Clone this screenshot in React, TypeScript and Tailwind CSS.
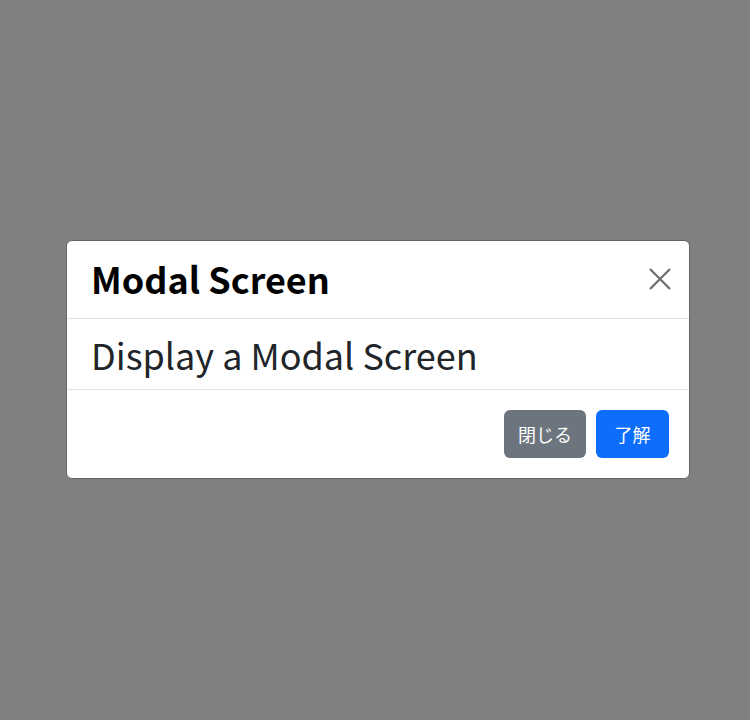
import React from "react";

const font = { fontFamily: '"Noto Sans CJK JP", "Noto Sans", sans-serif' };

function CloseIcon() {
  return (
    <svg width="22" height="22" viewBox="0 0 22 22" aria-hidden="true">
      <path d="M1 1 L21 21 M21 1 L1 21" stroke="#6c6c6c" strokeWidth="2.2" fill="none" />
    </svg>
  );
}

export default function App() {
  return (
    <div
      className="h-[720px] w-[750px] bg-[#808080] pl-[66px] pr-[60px] pt-[240px]"
      style={font}
    >
      {/* Modal */}
      <div className="w-[624px] rounded-md border border-[#666666] bg-white">
        {/* Header */}
        <div className="flex h-[78px] items-center justify-between border-b border-[#dee2e6] px-6">
          <h5 className="-mt-[4px] text-[36px] font-bold leading-none text-black">
            Modal Screen
          </h5>
          <button className="mr-[-6px] -mt-[2px] flex items-center justify-center">
            <CloseIcon />
          </button>
        </div>

        {/* Body */}
        <div className="border-b border-[#dee2e6] px-6 py-2">
          <p className="text-[36px] leading-[1.5] text-[#212529]">
            Display a Modal Screen
          </p>
        </div>

        {/* Footer */}
        <div className="flex items-center justify-end gap-[10px] p-5">
          <button className="flex h-12 w-[82px] items-center justify-center rounded-md bg-[#6c757d] text-[18px] text-white">
            閉じる
          </button>
          <button className="flex h-12 w-[73px] items-center justify-center rounded-md bg-[#0d6efd] text-[18px] text-white">
            了解
          </button>
        </div>
      </div>
    </div>
  );
}
